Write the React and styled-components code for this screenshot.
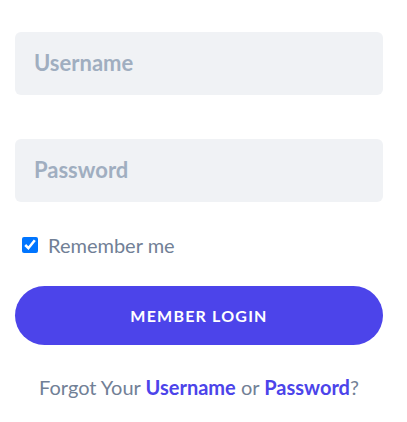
import React from 'react';
import styled, { createGlobalStyle } from 'styled-components';

const GlobalStyle = createGlobalStyle`
    body {
        margin: 0;
        background: #ffffff;
        font-family: Lato, "Open Sans", sans-serif;
    }
`;

const StyledForm = styled.form`
    display: flex;
    flex-direction: column;
    width: 368px;
    padding: 32px 0 0 15px;
`;

const StyledInput = styled.input`
    box-sizing: border-box;
    width: 100%;
    height: 63px;
    margin-bottom: ${props => props.gap || 0}px;
    padding: 0 19px 3px;
    border: none;
    border-radius: 6px;
    background-color: #f0f2f5;
    font-family: Lato, sans-serif;
    font-weight: 700;
    font-size: 22px;
    color: #4a5568;
    outline: none;
    &::placeholder {
        color: #a0aec0;
    }
`;

const StyledRemember = styled.label`
    display: flex;
    align-items: center;
    gap: 10px;
    margin: 31px 0 0 7px;
    font-family: Lato, sans-serif;
    font-size: 20px;
    color: #718096;
`;

const StyledCheckbox = styled.input`
    width: 16px;
    height: 16px;
    margin: 0;
    accent-color: #0075ff;
`;

const StyledButton = styled.button`
    height: 59px;
    margin-top: 29px;
    border: none;
    border-radius: 30px;
    background-color: #4c44ea;
    color: #ffffff;
    font-family: Lato, sans-serif;
    font-weight: 700;
    font-size: 16px;
    letter-spacing: 1.2px;
    text-transform: uppercase;
    cursor: pointer;
`;

const StyledP = styled.p`
    margin: 30px 0 0;
    text-align: center;
    font-family: Lato, sans-serif;
    font-size: 20px;
    color: #718096;
`;

const StyledLink = styled.a`
    color: #4c44ea;
    font-weight: 700;
    text-decoration: none;
`;

export default function App() {
    return (
        <>
            <GlobalStyle />
            <StyledForm onSubmit={e => e.preventDefault()}>
                <StyledInput type="text" placeholder="Username" gap={44} />
                <StyledInput type="password" placeholder="Password" />
                <StyledRemember>
                    <StyledCheckbox type="checkbox" defaultChecked />
                    Remember me
                </StyledRemember>
                <StyledButton type="submit">Member Login</StyledButton>
                <StyledP>
                    Forgot Your <StyledLink href="#">Username</StyledLink> or <StyledLink href="#">Password</StyledLink>?
                </StyledP>
            </StyledForm>
        </>
    );
}
